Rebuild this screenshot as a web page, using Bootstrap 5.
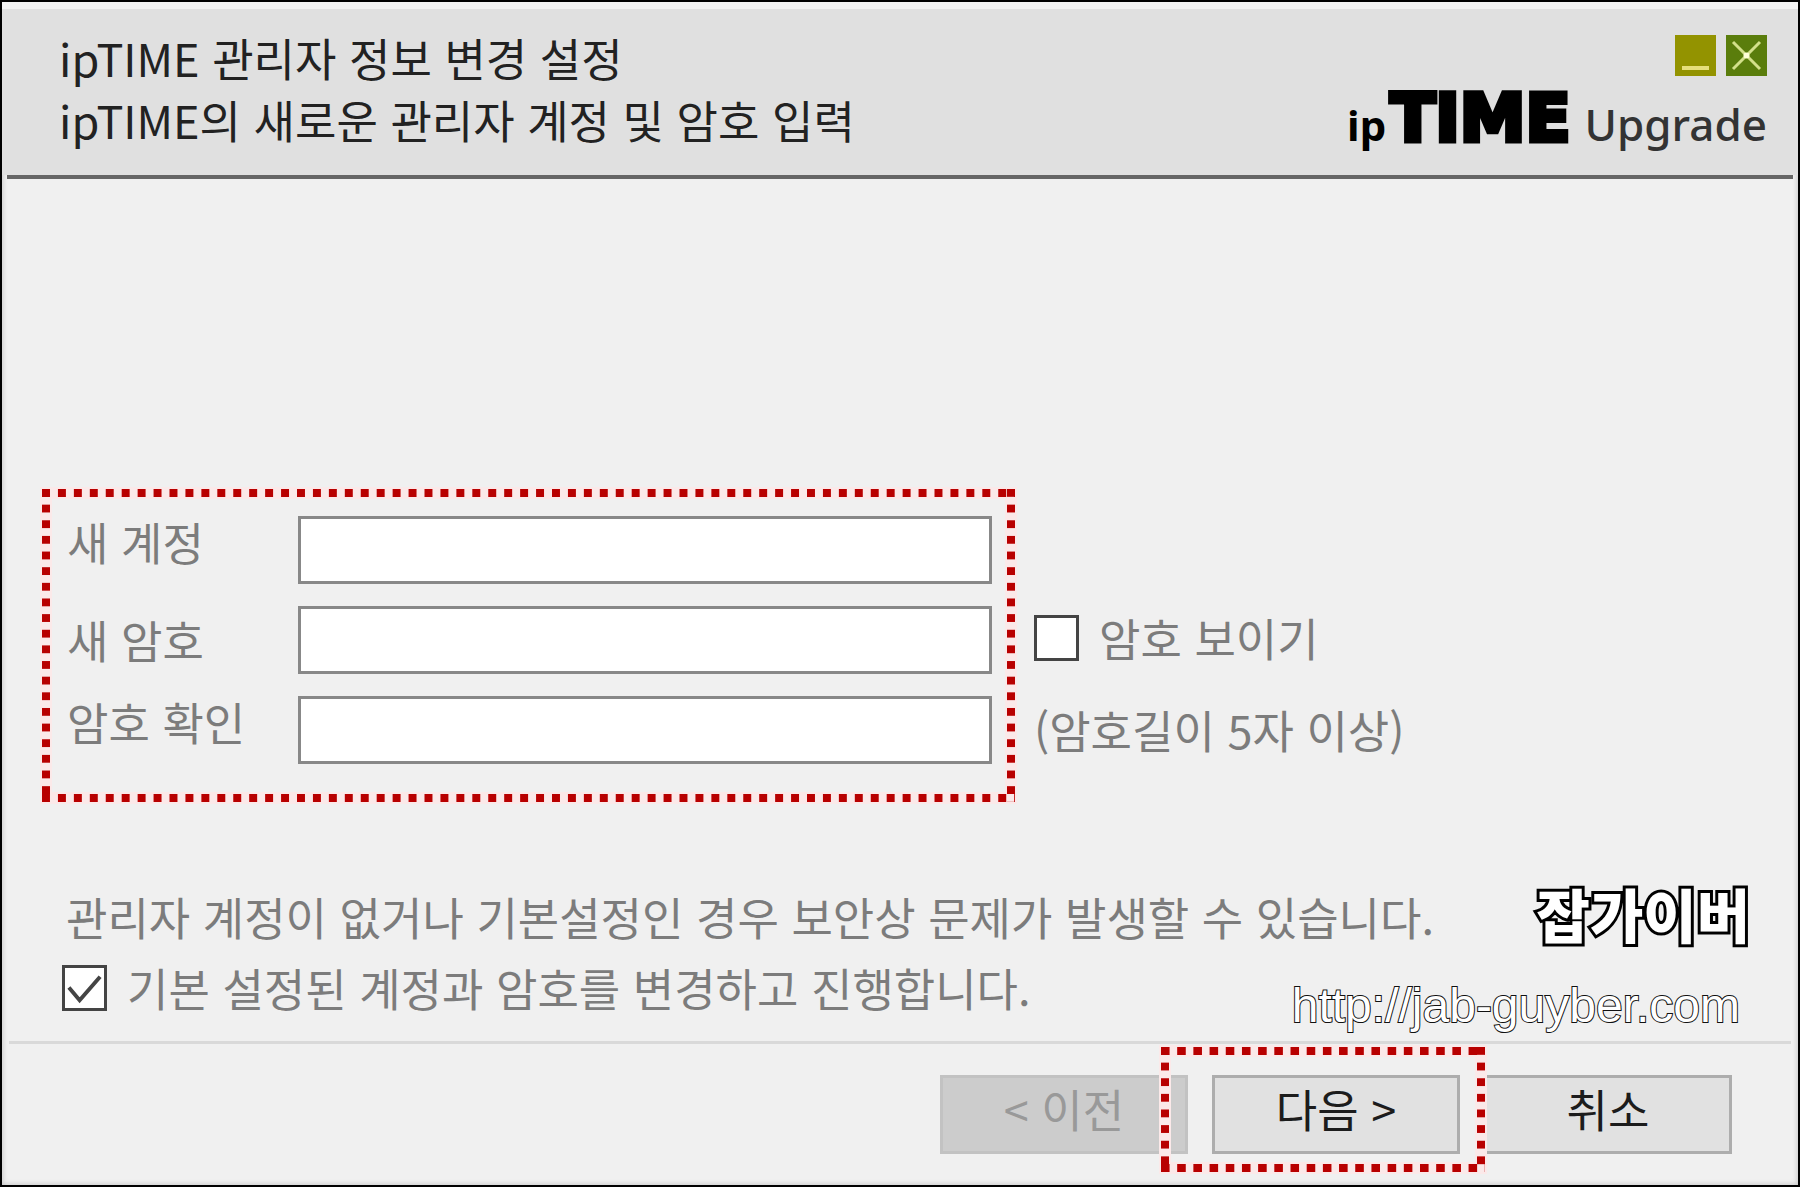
<!DOCTYPE html>
<html lang="ko">
<head>
<meta charset="utf-8">
<meta name="viewport" content="width=device-width, initial-scale=1">
<title>ipTIME Upgrade</title>
<link rel="stylesheet" href="https://cdn.jsdelivr.net/npm/bootstrap@5.3.0/dist/css/bootstrap.min.css">
<style>
  body { background: #f0f0f0; font-family: "Noto Sans CJK KR", sans-serif; font-size: 45px; font-weight: 400; line-height: 62px; color: #7c7c7c; }
  .app-window { border: 2px solid #000; box-shadow: inset 0 0 5px 1px #c8c8c8; }
  .title-bar { background: #e0e0e0; border-top: 7px solid #f2f2f2; padding: 18px 31px 0 57px; color: #222; }
  .title-bar h1 { font-size: 45px; font-weight: 400; line-height: 62px; }
  .title-lines { padding-bottom: 24px; }
  .rule-dark { height: 4px; margin: 0 5px; background: #666; }
  .rule-light { height: 3px; margin: 0 7px; background: #d9d9d9; }
  .win-controls { gap: 10px; }
  .win-btn { width: 41px; height: 41px; }
  .win-btn svg { display: block; width: 41px; height: 41px; }
  .win-min { background: #939300; }
  .win-close { background: #5a7d0c; }
  .title-side { padding-top: 8px; gap: 17px; }
  .brand { color: #000; line-height: 52px; }
  .brand-ip { font: 700 42px/52px "Noto Sans", sans-serif; margin-right: 4px; }
  .brand-time { font: 700 66px/52px "DejaVu Sans", sans-serif; -webkit-text-stroke: 5px #000; }
  .brand-upgrade { font: 500 44px/52px "Noto Sans", sans-serif; color: #333; margin-left: 14px; }

  .content { padding: 310px 40px 11px; }
  .dotted-frame { position: relative; }
  .dotted-frame::before { content: ""; position: absolute; inset: -2px; border: 12px solid #fbe9e9; pointer-events: none; }
  .dotted-frame::after { content: ""; position: absolute; inset: 0; pointer-events: none;
    background:
      linear-gradient(90deg, #b80000 50%, transparent 0) 0 0 / 16px 8px round no-repeat,
      linear-gradient(90deg, #b80000 50%, transparent 0) 0 100% / 16px 8px round no-repeat,
      linear-gradient(#b80000 50%, transparent 0) 0 0 / 8px 16px no-repeat round,
      linear-gradient(#b80000 50%, transparent 0) 100% 0 / 8px 16px no-repeat round; }
  .account-box { flex: 0 1 973px; padding: 27px 23px 38px 25px; }
  .account-box label { width: 231px; line-height: 52px; }
  .line-field { height: 68px; border: 3px solid #888; border-radius: 0; background: #fff; font-size: 40px; padding: 0 12px; }
  .field-stack { gap: 22px; }
  .side-notes { padding: 0 0 41px 19px; gap: 30px; }
  .reveal-row { gap: 20px; }
  .box-check { width: 45px; height: 46px; margin: 0; border: 3px solid #444; border-radius: 0 !important; background-color: #fff; flex: none; }
  .box-check:checked { background-color: #fff; border-color: #444;
    background-image: url("data:image/svg+xml,%3Csvg xmlns='http://www.w3.org/2000/svg' viewBox='0 0 40 40'%3E%3Cpath d='M4 19l11 13L36 8' fill='none' stroke='%23444' stroke-width='4'/%3E%3C/svg%3E"); }
  .notice { margin-top: 80px; }
  .notice p { line-height: 70px; padding-left: 24px; }
  .notice label { line-height: 72px; }
  .notice-check { padding-left: 20px; gap: 20px; }
  .watermark { position: absolute; right: 48px; bottom: 7px; text-align: right; color: #fff; }
  .watermark-name { font-size: 58px; font-weight: 900; line-height: 90px; margin-bottom: 20px; -webkit-text-stroke: 6px #000; paint-order: stroke fill; stroke-linejoin: round; }
  .watermark-url { display: block; padding-right: 10px; font: 400 48px/56px "Liberation Sans", sans-serif; color: #fff; text-decoration: none; -webkit-text-stroke: 2px #111; paint-order: stroke fill; }

  .actions { padding: 31px 66px 31px; gap: 24px; }
  .step-btn { width: 248px; height: 79px; padding: 0 0 12px; border: 3px solid #adadad; border-radius: 0; background: #e1e1e1; font-size: 45px; font-weight: 400; line-height: 60px; color: #1c1c1c; }
  .step-btn:disabled { background: #ccc; border-color: #c2c2c2; color: #999; opacity: 1; }
  .next-mark { margin: -28px -25px -18px -51px; padding: 28px 25px 18px 51px; z-index: 1; }
</style>
</head>
<body>
<div class="app-window min-vh-100 d-flex flex-column">
  <header class="title-bar d-flex justify-content-between">
    <div class="title-lines">
      <h1 class="m-0">ipTIME 관리자 정보 변경 설정</h1>
      <p class="m-0">ipTIME의 새로운 관리자 계정 및 암호 입력</p>
    </div>
    <div class="title-side d-flex flex-column align-items-end">
      <div class="win-controls d-flex">
        <button type="button" class="btn win-btn win-min border-0 rounded-0 p-0" aria-label="최소화">
          <svg viewBox="0 0 41 41"><path d="M7 33H34" stroke="#e6df7a" stroke-width="4"/></svg>
        </button>
        <button type="button" class="btn win-btn win-close border-0 rounded-0 p-0" aria-label="닫기">
          <svg viewBox="0 0 41 41"><path d="M7 7L34 34M34 7L7 34" stroke="#d3e08a" stroke-width="3"/><circle cx="20.500" cy="20.500" r="3" fill="#ffffd8"/></svg>
        </button>
      </div>
      <div class="brand d-flex align-items-baseline">
        <span class="brand-ip">ip</span><span class="brand-time">TIME</span><span class="brand-upgrade">Upgrade</span>
      </div>
    </div>
  </header>
  <div class="rule-dark"></div>

  <main class="content position-relative flex-grow-1">
    <div class="d-flex">
      <div class="account-box dotted-frame d-flex flex-column field-stack">
        <div class="d-flex align-items-start">
          <label for="account" class="flex-shrink-0">새 계정</label>
          <input id="account" type="text" class="form-control line-field">
        </div>
        <div class="d-flex align-items-center">
          <label for="password" class="flex-shrink-0">새 암호</label>
          <input id="password" type="password" class="form-control line-field">
        </div>
        <div class="d-flex align-items-start">
          <label for="confirm" class="flex-shrink-0">암호 확인</label>
          <input id="confirm" type="password" class="form-control line-field">
        </div>
      </div>
      <div class="side-notes d-flex flex-column justify-content-end">
        <div class="reveal-row d-flex align-items-center">
          <input id="reveal" type="checkbox" class="form-check-input box-check">
          <label for="reveal">암호 보이기</label>
        </div>
        <span>(암호길이 5자 이상)</span>
      </div>
    </div>

    <div class="notice">
      <p class="m-0">관리자 계정이 없거나 기본설정인 경우 보안상 문제가 발생할 수 있습니다.</p>
      <div class="notice-check d-flex align-items-center">
        <input id="proceed" type="checkbox" class="form-check-input box-check" checked>
        <label for="proceed">기본 설정된 계정과 암호를 변경하고 진행합니다.</label>
      </div>
    </div>

    <div class="watermark">
      <div class="watermark-name">잡가이버</div>
      <a class="watermark-url" href="http://jab-guyber.com">http://jab-guyber.com</a>
    </div>
  </main>

  <div class="rule-light"></div>
  <footer class="actions d-flex justify-content-end">
    <button type="button" class="btn step-btn" disabled>&lt; 이전</button>
    <div class="next-mark dotted-frame"><button type="button" class="btn step-btn">다음 &gt;</button></div>
    <button type="button" class="btn step-btn">취소</button>
  </footer>
</div>
<script src="https://cdn.jsdelivr.net/npm/bootstrap@5.3.0/dist/js/bootstrap.bundle.min.js"></script>
</body>
</html>
